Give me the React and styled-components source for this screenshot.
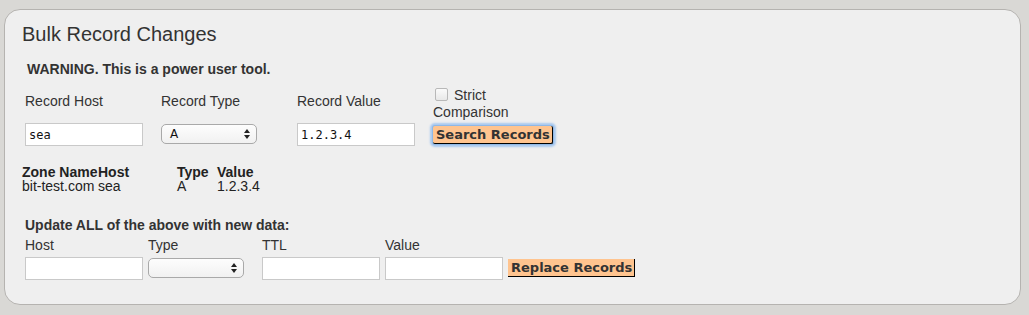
import React from 'react'
import styled, { createGlobalStyle } from 'styled-components';

const GlobalStyle = createGlobalStyle`
  html, body {
    margin: 0;
    padding: 0;
    background: #d9d8d5;
    font-family: "Liberation Sans", Arial, sans-serif;
    color: #333;
  }
`;

const Page = styled.div`
  padding: 9px 8px 10px 4px;
`;

const Panel = styled.div`
  box-sizing: border-box;
  width: 1017px;
  height: 296px;
  background: #efefef;
  border: 1px solid #b5b3b0;
  border-radius: 16px;
  padding: 12px 0 0 17px;
`;

const Title = styled.h2`
  margin: 0;
  font-size: 20px;
  font-weight: normal;
  line-height: 24px;
  color: #333;
`;

const Warning = styled.div`
  margin: 15px 0 0 5px;
  font-size: 14px;
  font-weight: bold;
  line-height: 16px;
`;

const FieldRow = styled.div`
  display: grid;
  grid-template-columns: ${({ cols }) => cols};
  align-items: end;
  margin: ${({ m }) => m};
`;

const Field = styled.div`
  display: flex;
  flex-direction: column;
  gap: ${({ gap }) => gap || '9px'};
`;

const Label = styled.label`
  font-size: 14px;
  line-height: 16px;
  color: #333;
`;

const Input = styled.input`
  box-sizing: border-box;
  width: 118px;
  height: 23px;
  margin: 0;
  border: 1px solid #c9c9c9;
  background: #fff;
  padding: 1px 3px 0;
  font-family: "DejaVu Sans Mono", monospace;
  font-size: 12px;
  color: #111;
  outline: none;
`;

const SelectBox = styled.div`
  box-sizing: border-box;
  width: 96px;
  height: 20px;
  border: 1px solid #a9a9a9;
  border-radius: 5px;
  background: linear-gradient(#fdfdfd, #f1f1f1);
  display: flex;
  align-items: center;
  justify-content: space-between;
  padding: 0 6px 0 8px;
  margin: 1px 0 2px;
  font-family: "DejaVu Sans", sans-serif;
  font-size: 12px;
  color: #111;
`;

const Arrows = styled.svg`
  width: 6px;
  height: 10px;
`;

const CheckLine = styled.div`
  font-size: 14px;
  line-height: 17px;
  display: flex;
  flex-direction: column;
`;

const Check = styled.span`
  display: inline-block;
  width: 11px;
  height: 11px;
  border: 1px solid #b8b8b8;
  border-radius: 2px;
  background: linear-gradient(#fafafa, #e8e8e8);
  margin: 0 6px 0 2px;
  vertical-align: -1px;
`;

const ButtonWrap = styled.div`
  margin-bottom: ${({ mb }) => mb}px;
`;

const Button = styled.button`
  margin: 0;
  padding: 1px 2px 0 3px;
  background: #ffc48f;
  border: none;
  border-right: 1px solid #000;
  border-bottom: 1px solid #000;
  font-family: "DejaVu Sans", Verdana, sans-serif;
  font-weight: bold;
  font-size: 13px;
  line-height: 16px;
  color: #333;
  box-shadow: ${({ focused }) => focused ? '0 0 0 1px #8fb8e6, 0 0 2px 3px #a9c9ef' : 'none'};
  border-radius: ${({ focused }) => focused ? '2px' : '0'};
  white-space: nowrap;
`;

const Results = styled.div`
  display: grid;
  grid-template-columns: 76px 79px 40px auto;
  margin: 19px 0 0 0;
  font-size: 14px;
  line-height: 14px;
  color: #222;
`;

const Head = styled.div`
  font-weight: bold;
`;

const UpdateTitle = styled.div`
  margin: 24px 0 0 3px;
  font-size: 14px;
  font-weight: bold;
  line-height: 16px;
`;

function Select({ value }) {
  return (
    <SelectBox>
      <span>{value}</span>
      <Arrows viewBox="0 0 6 10">
        <path d="M3 0 L6 4 L0 4 Z M0 6 L6 6 L3 10 Z" fill="#222" />
      </Arrows>
    </SelectBox>
  )
}

export default function App() {
  return (
    <>
      <GlobalStyle />
      <Page>
        <Panel>
          <Title>Bulk Record Changes</Title>
          <Warning>WARNING. This is a power user tool.</Warning>

          <FieldRow cols="136px 136px 136px auto" m="10px 0 0 3px">
            <Field gap="14px">
              <Label>Record Host</Label>
              <Input defaultValue="sea" />
            </Field>
            <Field gap="14px">
              <Label>Record Type</Label>
              <Select value="A" />
            </Field>
            <Field gap="14px">
              <Label>Record Value</Label>
              <Input defaultValue="1.2.3.4" />
            </Field>
            <Field gap="4px">
              <CheckLine>
                <span><Check />Strict</span>
                <span>Comparison</span>
              </CheckLine>
              <ButtonWrap mb={2}>
                <Button focused>Search Records</Button>
              </ButtonWrap>
            </Field>
          </FieldRow>

          <Results>
            <Head>Zone Name</Head>
            <Head>Host</Head>
            <Head>Type</Head>
            <Head>Value</Head>
            <div>bit-test.com</div>
            <div>sea</div>
            <div>A</div>
            <div>1.2.3.4</div>
          </Results>

          <UpdateTitle>Update ALL of the above with new data:</UpdateTitle>
          <FieldRow cols="123px 114px 123px 123px auto" m="4px 0 0 3px">
            <Field gap="4px">
              <Label>Host</Label>
              <Input />
            </Field>
            <Field gap="4px">
              <Label>Type</Label>
              <Select value="" />
            </Field>
            <Field gap="4px">
              <Label>TTL</Label>
              <Input />
            </Field>
            <Field gap="4px">
              <Label>Value</Label>
              <Input />
            </Field>
            <ButtonWrap mb={3}>
              <Button>Replace Records</Button>
            </ButtonWrap>
          </FieldRow>
        </Panel>
      </Page>
    </>
  )
}
